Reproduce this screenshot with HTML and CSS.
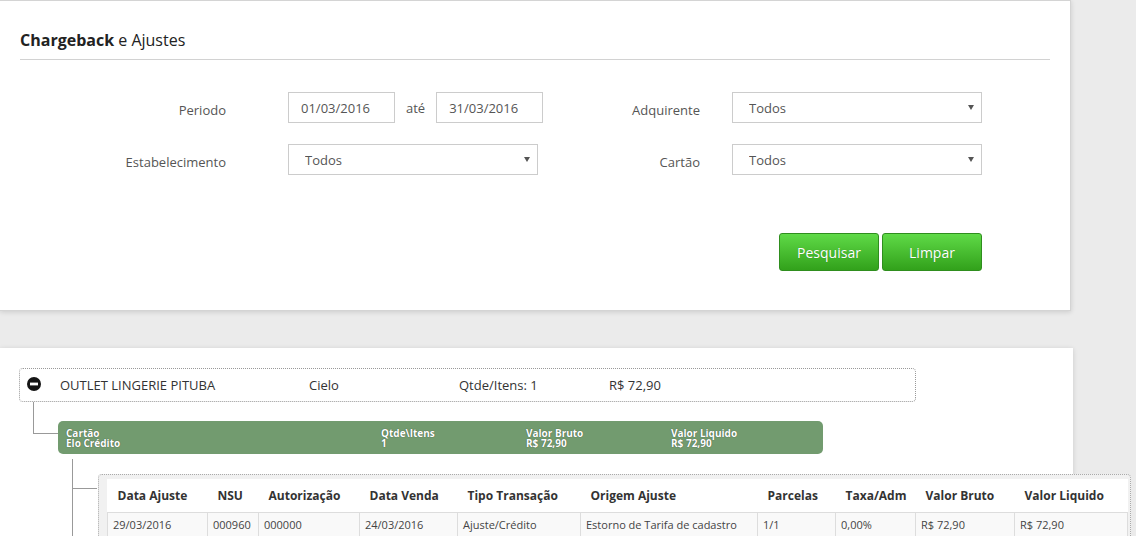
FILE: index.html
```html
<!DOCTYPE html>
<html lang="pt-BR">
<head>
    <meta charset="UTF-8">
    <title>Chargeback e Ajustes</title>
    <link rel="stylesheet" href="styles.css">
</head>
<body>
    <!-- filtros -->
    <section class="card filter-card">
        <h2 class="card-title"><b>Chargeback</b> e Ajustes</h2>

        <div class="filter-body">
            <form class="filters">
                <label class="filter-label">Periodo</label>
                <div class="period">
                    <input class="field date" type="text" value="01/03/2016">
                    <span class="period-sep">até</span>
                    <input class="field date" type="text" value="31/03/2016">
                </div>

                <label class="filter-label">Adquirente</label>
                <div class="select-wrap">
                    <select class="field select"><option>Todos</option></select>
                </div>

                <label class="filter-label">Estabelecimento</label>
                <div class="select-wrap">
                    <select class="field select"><option>Todos</option></select>
                </div>

                <label class="filter-label">Cartão</label>
                <div class="select-wrap">
                    <select class="field select"><option>Todos</option></select>
                </div>
            </form>

            <div class="actions">
                <button class="btn" type="button">Pesquisar</button>
                <button class="btn" type="button">Limpar</button>
            </div>
        </div>
    </section>

    <!-- resultado em árvore -->
    <section class="card result-card">
        <div class="tree">
            <div class="node">
                <svg class="toggle" width="14" height="14" viewBox="0 0 14 14">
                    <circle cx="7" cy="7" r="7" fill="#151515"/>
                    <rect x="3" y="5.6" width="8" height="2.8" fill="#fff"/>
                </svg>
                <span class="node-col name">OUTLET LINGERIE PITUBA</span>
                <span class="node-col acq">Cielo</span>
                <span class="node-col qty">Qtde/Itens: 1</span>
                <span class="node-col">R$ 72,90</span>
            </div>

            <div class="branch">
                <div class="elbow"></div>
                <div class="group-bar">
                    <div class="group-col">Cartão<br>Elo Crédito</div>
                    <div class="group-col">Qtde\Itens<br>1</div>
                    <div class="group-col">Valor Bruto<br>R$ 72,90</div>
                    <div class="group-col">Valor Liquido<br>R$ 72,90</div>
                </div>
            </div>

            <div class="leaf">
                <div class="stem"></div>
                <div class="detail">
                    <table class="grid">
                        <colgroup>
                            <col style="width:100px">
                            <col style="width:51px">
                            <col style="width:101px">
                            <col style="width:98px">
                            <col style="width:123px">
                            <col style="width:177px">
                            <col style="width:78px">
                            <col style="width:80px">
                            <col style="width:99px">
                            <col style="width:113px">
                        </colgroup>
                        <thead>
                            <tr>
                                <th>Data Ajuste</th>
                                <th>NSU</th>
                                <th>Autorização</th>
                                <th>Data Venda</th>
                                <th>Tipo Transação</th>
                                <th>Origem Ajuste</th>
                                <th>Parcelas</th>
                                <th>Taxa/Adm</th>
                                <th>Valor Bruto</th>
                                <th>Valor Liquido</th>
                            </tr>
                        </thead>
                        <tbody>
                            <tr>
                                <td>29/03/2016</td>
                                <td>000960</td>
                                <td>000000</td>
                                <td>24/03/2016</td>
                                <td>Ajuste/Crédito</td>
                                <td>Estorno de Tarifa de cadastro</td>
                                <td>1/1</td>
                                <td>0,00%</td>
                                <td>R$ 72,90</td>
                                <td>R$ 72,90</td>
                            </tr>
                        </tbody>
                    </table>
                </div>
            </div>
        </div>
    </section>
</body>
</html>
```

FILE: styles.css
```css
body {
    margin: 0;
    background-color: #ebebeb;
    font-family: "Open Sans", "Liberation Sans", sans-serif;
    color: #333;
    overflow: hidden;
}

/* cartões brancos */
.card {
    box-sizing: border-box;
    background: #fff;
    box-shadow: 0 1px 5px rgba(0, 0, 0, 0.14);
}

.filter-card {
    width: 1071px;
    border: 1px solid #d4d4d4;
    border-left: 0;
    padding: 28px 20px 39px 20px;
}

.card-title {
    margin: 0;
    padding-bottom: 8px;
    border-bottom: 1px solid #d2d2d2;
    font-size: 16px;
    line-height: 22px;
    font-weight: normal;
    color: #222;
}

.card-title b {
    font-weight: bold;
}

.filter-body {
    width: 962px;
    margin-top: 32px;
}

/* grade do formulário */
.filters {
    display: grid;
    grid-template-columns: 268px 250px 194px 250px;
    grid-auto-rows: 31px;
    row-gap: 21px;
    align-items: center;
}

.filter-label {
    text-align: right;
    font-size: 13px;
    color: #555;
    padding-top: 4px;
}

.filters .filter-label:nth-of-type(odd) {
    padding-right: 62px;
}

.filters .filter-label:nth-of-type(even) {
    padding-right: 32px;
}

.period {
    display: flex;
    align-items: center;
    gap: 11px;
    white-space: nowrap;
}

.period-sep {
    font-size: 13px;
    color: #555;
}

.field {
    box-sizing: border-box;
    height: 31px;
    border: 1px solid #ccc;
    border-radius: 0;
    background: #fff;
    font-family: inherit;
    font-size: 13px;
    color: #555;
    outline: none;
}

.date {
    width: 107px;
    padding: 0 12px;
}

.select-wrap {
    position: relative;
    width: 250px;
}

.select {
    width: 250px;
    padding: 0 16px;
    appearance: none;
    -webkit-appearance: none;
}

/* setinha do select */
.select-wrap:after {
    content: "";
    position: absolute;
    right: 8px;
    top: 13px;
    border-left: 3px solid transparent;
    border-right: 3px solid transparent;
    border-top: 5px solid #555;
    pointer-events: none;
}

/* botões */
.actions {
    display: flex;
    justify-content: flex-end;
    gap: 3px;
    margin-top: 58px;
}

.btn {
    width: 100px;
    height: 38px;
    border: 1px solid #2f8e1e;
    border-radius: 3px;
    background: linear-gradient(#5fda47, #32a11b);
    color: #fff;
    font-family: inherit;
    font-size: 14px;
    text-shadow: 0 0 1px rgba(0, 0, 0, 0.25);
    cursor: pointer;
}

/* resultado */
.result-card {
    width: 1073px;
    margin-top: 37px;
    padding: 20px 0 40px 19px;
}

.node {
    box-sizing: border-box;
    display: flex;
    align-items: center;
    width: 897px;
    height: 34px;
    padding-left: 7px;
    border: 1px dotted #999;
    border-radius: 4px;
    font-size: 13px;
    color: #333;
}

.toggle {
    margin-right: 19px;
    margin-top: -3px;
}

.node-col.name {
    width: 249px;
}

.node-col.acq,
.node-col.qty {
    width: 150px;
}

.branch {
    display: flex;
    align-items: flex-start;
    margin-left: 14px;
}

.elbow {
    box-sizing: border-box;
    width: 25px;
    height: 32px;
    border-left: 1px solid #999;
    border-bottom: 1px solid #999;
}

.group-bar {
    display: grid;
    grid-template-columns: 315px 145px 145px auto;
    align-items: center;
    box-sizing: border-box;
    width: 765px;
    height: 33px;
    margin-top: 19px;
    padding: 0 8px;
    border-radius: 5px;
    background: #729b6f;
    color: #fff;
    font-size: 10px;
    font-weight: bold;
    line-height: 10px;
    text-shadow: 0 0 1px rgba(0, 0, 0, 0.6);
}

.leaf {
    display: flex;
    margin-left: 53px;
}

.stem {
    position: relative;
    flex: none;
    width: 25px;
    margin-top: 5px;
    border-left: 1px solid #999;
}

.stem:after {
    content: "";
    position: absolute;
    left: 0;
    top: 29px;
    width: 24px;
    height: 1px;
    background: #999;
}

.detail {
    margin-top: 20px;
    padding: 4px 2px 6px 8px;
    border: 1px dotted #aaa;
    border-radius: 4px;
    background: #f1f1f1;
}

/* tabela de ajustes */
.grid {
    width: 1020px;
    table-layout: fixed;
    border-collapse: collapse;
    background: #fff;
}

.grid th {
    height: 33px;
    padding: 0 10px;
    text-align: left;
    font-size: 12px;
    font-weight: bold;
    color: #333;
    white-space: nowrap;
    border-bottom: 1px solid #ddd;
}

.grid td {
    height: 23px;
    padding: 0 5px;
    font-size: 11px;
    color: #444;
    white-space: nowrap;
    border: 1px solid #ddd;
    background: #f9f9f9;
}
```
